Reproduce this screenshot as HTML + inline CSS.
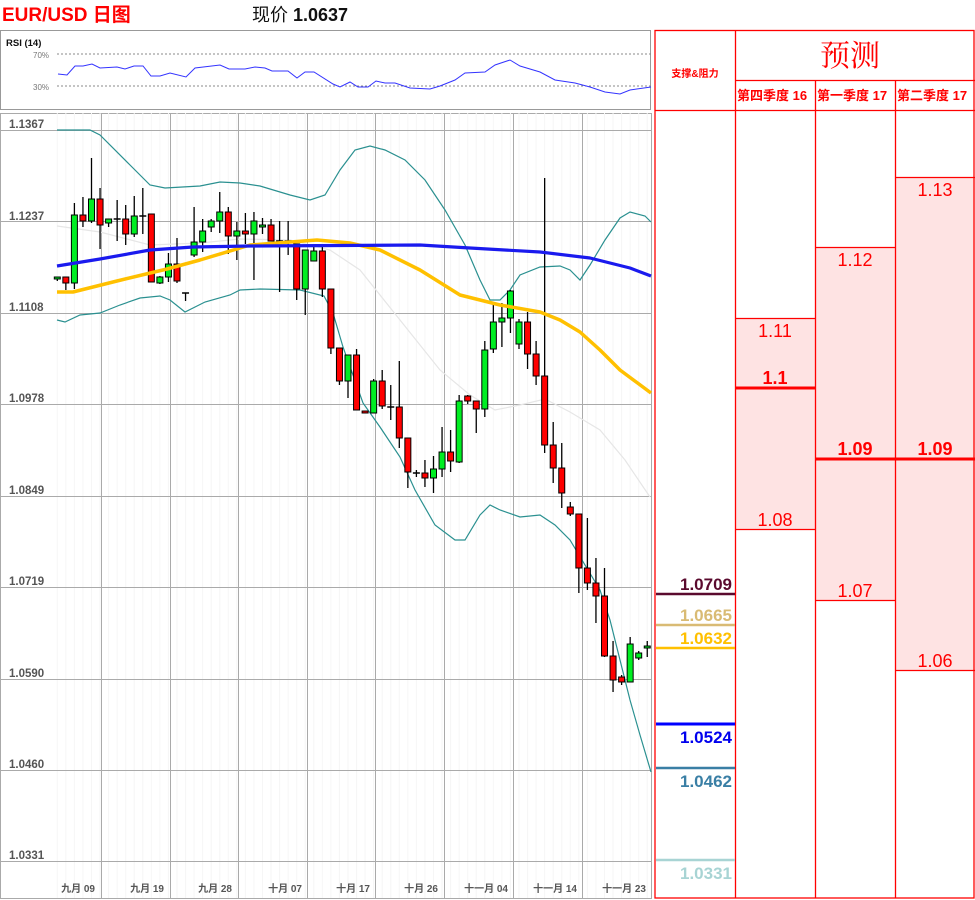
<!DOCTYPE html>
<html><head><meta charset="utf-8">
<style>
html,body{margin:0;padding:0;background:#fff;}
body{width:975px;height:900px;position:relative;overflow:hidden;font-family:"Liberation Sans","Noto Sans CJK SC",sans-serif;}
svg{position:absolute;left:0;top:0;}
</style></head>
<body>
<svg id="s" width="975" height="900" xmlns="http://www.w3.org/2000/svg" font-family="Liberation Sans, Noto Sans CJK SC, sans-serif">
<text x="2" y="21" font-size="19" font-weight="bold" fill="#f00">EUR/USD 日图</text>
<text x="252" y="21" font-size="18" fill="#111">现价 <tspan font-weight="bold">1.0637</tspan></text>
<!-- RSI panel -->
<rect x="0.5" y="30.5" width="650" height="79" fill="#fff" stroke="#999"/>
<text x="6" y="46" font-size="9.5" font-weight="bold" fill="#111">RSI (14)</text>
<text x="33" y="58" font-size="8" fill="#777">70%</text>
<text x="33" y="90" font-size="8" fill="#777">30%</text>
<line x1="57" y1="54" x2="651" y2="54" stroke="#888" stroke-dasharray="2,2"/>
<line x1="57" y1="86" x2="651" y2="86" stroke="#888" stroke-dasharray="2,2"/>
<polyline fill="none" stroke="#3333ff" stroke-width="1" points="58,74 67,75 75,66 83,66 92,64 100,68 117,67 125,69 134,66 143,66 151,76 160,76 170,73 186,77 195,68 220,65 229,69 245,69 255,67 265,68 272,71 288,71 297,78 305,72 314,72 333,84 340,87 350,82 358,87 368,87 376,81 385,83 395,83 410,88 430,89 440,86 455,80 465,73 485,72 495,65 510,60 520,66 540,72 555,80 575,83 590,87 605,92 620,94 630,90 651,87"/>
<!-- main chart -->
<rect x="0.5" y="113.5" width="651" height="785" fill="#fff" stroke="#aaa"/>
<g id="minor" stroke="#f6f6f6" stroke-width="1"></g>
<g stroke="#aaa" stroke-width="1">
<line x1="101.5" y1="113" x2="101.5" y2="898"/><line x1="170.5" y1="113" x2="170.5" y2="898"/>
<line x1="238.5" y1="113" x2="238.5" y2="898"/><line x1="307.5" y1="113" x2="307.5" y2="898"/>
<line x1="375.5" y1="113" x2="375.5" y2="898"/><line x1="444.5" y1="113" x2="444.5" y2="898"/>
<line x1="513.5" y1="113" x2="513.5" y2="898"/><line x1="582.5" y1="113" x2="582.5" y2="898"/>
<line x1="0" y1="130.5" x2="651" y2="130.5"/><line x1="0" y1="221.5" x2="651" y2="221.5"/>
<line x1="0" y1="313.5" x2="651" y2="313.5"/><line x1="0" y1="404.5" x2="651" y2="404.5"/>
<line x1="0" y1="496.5" x2="651" y2="496.5"/><line x1="0" y1="587.5" x2="651" y2="587.5"/>
<line x1="0" y1="679.5" x2="651" y2="679.5"/><line x1="0" y1="770.5" x2="651" y2="770.5"/>
<line x1="0" y1="861.5" x2="651" y2="861.5"/>
</g>
<g font-size="11.5" font-weight="bold" fill="#555">
<text x="9" y="128">1.1367</text><text x="9" y="220">1.1237</text><text x="9" y="311">1.1108</text>
<text x="9" y="402">1.0978</text><text x="9" y="494">1.0849</text><text x="9" y="585">1.0719</text>
<text x="9" y="677">1.0590</text><text x="9" y="768">1.0460</text><text x="9" y="859">1.0331</text>
</g>
<g font-size="10" font-weight="bold" fill="#555" text-anchor="end">
<text x="95" y="892">九月 09</text><text x="164" y="892">九月 19</text><text x="232" y="892">九月 28</text>
<text x="302" y="892">十月 07</text><text x="370" y="892">十月 17</text><text x="438" y="892">十月 26</text>
<text x="508" y="892">十一月 04</text><text x="577" y="892">十一月 14</text><text x="646" y="892">十一月 23</text>
</g>
<polyline fill="none" stroke="#e6e6e6" stroke-width="1.2" points="57,226 100,232 150,245 200,243 240,239 290,240 330,250 360,270 400,320 440,370 470,395 495,410 520,405 545,399 570,412 600,430 625,460 650,497"/>
<polyline fill="none" stroke="#2a9090" stroke-width="1.2" points="57,130 90,130 100,135 130,165 150,185 165,188 200,186 220,182 240,183 260,186 290,195 310,200 325,195 340,170 355,150 370,146 385,150 405,160 425,180 445,210 465,245 480,280 490,300 500,300 510,290 520,275 540,267 560,266 570,270 580,280 590,265 605,240 620,218 630,212 645,216 651,222"/>
<polyline fill="none" stroke="#2a9090" stroke-width="1.2" points="57,320 65,322 80,315 100,313 120,305 140,298 160,296 170,300 185,312 205,302 230,295 240,290 260,289 300,290 324,296 333,313 343,347 363,403 380,427 400,457 415,490 435,525 455,540 465,540 480,515 490,505 500,510 520,517 540,515 555,525 570,540 585,565 600,590 610,620 620,660 630,700 640,735 651,772"/>
<g id="candles"></g>
<polyline fill="none" stroke="#ffc000" stroke-width="3.5" stroke-linejoin="round" points="57,292 73,292 117,281 167,269 200,260 250,245 317,240 350,243 380,250 420,270 460,295 500,305 540,312 560,320 580,332 600,350 620,370 651,393"/>
<polyline fill="none" stroke="#1a1aee" stroke-width="3.2" stroke-linejoin="round" points="57,266 100,259 150,250 193,247 250,246 420,245 470,248 540,252 590,258 630,268 651,276"/>
<!-- right panel -->
<rect x="736" y="318" width="79" height="211" fill="#fee3e3"/>
<rect x="816" y="247" width="79" height="353" fill="#fee3e3"/>
<rect x="896" y="177" width="79" height="493" fill="#fee3e3"/>
<g stroke="#f00" stroke-width="1.3" fill="none">
<rect x="655" y="30.5" width="319" height="867.5"/>
<line x1="735.5" y1="30" x2="735.5" y2="898"/>
<line x1="815.5" y1="80" x2="815.5" y2="898"/>
<line x1="895.5" y1="80" x2="895.5" y2="898"/>
<line x1="735" y1="80.5" x2="975" y2="80.5"/>
<line x1="655" y1="110.5" x2="975" y2="110.5"/>
<line x1="735" y1="318.5" x2="815" y2="318.5"/>
<line x1="735" y1="529.5" x2="815" y2="529.5"/>
<line x1="815" y1="247.5" x2="895" y2="247.5"/>
<line x1="815" y1="600.5" x2="895" y2="600.5"/>
<line x1="895" y1="177.5" x2="975" y2="177.5"/>
<line x1="895" y1="670.5" x2="975" y2="670.5"/>
</g>
<line x1="735" y1="388" x2="815" y2="388" stroke="#f00" stroke-width="3"/>
<line x1="815" y1="459" x2="975" y2="459" stroke="#f00" stroke-width="3"/>
<text x="695" y="77" font-size="10" font-weight="bold" fill="#f00" text-anchor="middle">支撑&amp;阻力</text>
<text x="850" y="66" font-size="30" fill="#f00" text-anchor="middle" font-family="Noto Serif CJK SC, serif">预测</text>
<g font-size="13" font-weight="bold" fill="#f00">
<text x="737" y="100">第四季度 16</text><text x="817" y="100">第一季度 17</text><text x="897" y="100">第二季度 17</text>
</g>
<g font-size="18" fill="#f00" text-anchor="middle">
<text x="775" y="337">1.11</text><text x="775" y="526">1.08</text>
<text x="855" y="266">1.12</text><text x="855" y="597">1.07</text>
<text x="935" y="196">1.13</text><text x="935" y="667">1.06</text>
<g font-weight="bold"><text x="775" y="384">1.1</text><text x="855" y="455">1.09</text><text x="935" y="455">1.09</text></g>
</g>
<line x1="656" y1="594" x2="735" y2="594" stroke="#5a0a2e" stroke-width="2.5"/>
<line x1="656" y1="625" x2="735" y2="625" stroke="#d9bb74" stroke-width="2.5"/>
<line x1="656" y1="648" x2="735" y2="648" stroke="#ffc000" stroke-width="2.5"/>
<line x1="656" y1="724" x2="735" y2="724" stroke="#0000ff" stroke-width="3"/>
<line x1="656" y1="768" x2="735" y2="768" stroke="#3a7fa5" stroke-width="2.5"/>
<line x1="656" y1="860" x2="735" y2="860" stroke="#a8d4d4" stroke-width="2.5"/>
<g font-size="17" font-weight="bold" text-anchor="end">
<text x="732" y="590" fill="#5a0a2e">1.0709</text>
<text x="732" y="621" fill="#d9bb74">1.0665</text>
<text x="732" y="644" fill="#ffc000">1.0632</text>
<text x="732" y="743" fill="#0000ee">1.0524</text>
<text x="732" y="787" fill="#3a7fa5">1.0462</text>
<text x="732" y="879" fill="#a8d4d4">1.0331</text>
</g>
</svg>
<script>
var d=[
[277,279,277,281,'g'],[277,283,277,290,'r'],[215,283,203,289,'g'],[215,221,197,227,'r'],[199,221,158,223,'g'],
[199,225,188,249,'r'],[219,223,219,227,'g'],[219,219,200,241,'d'],[219,234,205,245,'r'],[216,234,196,237,'g'],
[216,216,188,234,'d'],[214,282,214,282,'r'],[277,283,276,284,'g'],[264,277,253,282,'g'],[264,281,238,283,'r'],
[293,293,293,301,'d'],[242,255,207,257,'g'],[231,242,219,252,'g'],[221,227,219,232,'g'],[212,221,192,233,'g'],
[212,236,207,254,'r'],[231,236,222,260,'g'],[231,234,213,244,'r'],[221,234,212,280,'g'],[225,227,218,234,'g'],
[225,241,219,241,'r'],[241,241,221,292,'d'],[241,241,221,255,'d'],[244,289,244,300,'r'],[250,289,250,315,'g'],
[251,261,247,261,'g'],[251,289,247,297,'r'],[289,348,289,354,'r'],[348,381,348,385,'r'],[355,381,355,398,'g'],
[355,410,349,410,'r'],[411,413,411,413,'r'],[381,413,379,413,'g'],[381,406,370,409,'r'],[407,407,385,420,'d'],
[407,438,361,448,'r'],[438,472,438,488,'r'],[473,473,470,477,'d'],[473,478,460,487,'r'],[469,478,456,493,'g'],
[452,469,427,477,'g'],[452,461,430,472,'r'],[401,462,395,463,'g'],[396,401,395,404,'r'],[401,409,401,433,'r'],
[350,409,341,417,'g'],[322,349,303,353,'g'],[318,322,303,347,'g'],[291,318,290,333,'g'],[322,344,319,349,'g'],
[322,354,312,369,'r'],[354,376,341,385,'r'],[376,445,178,453,'r'],[445,468,422,483,'r'],[468,493,443,508,'r'],
[507,514,502,516,'r'],[514,568,514,593,'r'],[568,583,518,590,'r'],[583,596,558,623,'r'],[596,656,568,657,'r'],
[656,680,641,692,'r'],[677,682,675,685,'r'],[644,682,637,682,'g'],[653,658,651,660,'g'],[646,647,641,657,'g']];
var ns='http://www.w3.org/2000/svg',g=document.getElementById('candles'),mg=document.getElementById('minor');
function el(n,a,p){var e=document.createElementNS(ns,n);for(var k in a)e.setAttribute(k,a[k]);p.appendChild(e);}
for(var i=0;i<70;i++){var x=57.3+8.55*i;el('line',{x1:x,y1:113,x2:x,y2:898},mg);}
d.forEach(function(c,i){var x=57.3+8.55*i;
el('line',{x1:x,y1:c[2],x2:x,y2:c[3],stroke:'#000','stroke-width':1.3},g);
if(c[4]=='d'){el('line',{x1:x-3.5,y1:c[0],x2:x+3.5,y2:c[0],stroke:'#000','stroke-width':1.5},g);}
else el('rect',{x:x-3,y:c[0],width:6,height:Math.max(c[1]-c[0],2),fill:c[4]=='g'?'#00ee22':'#ff0000',stroke:'#000','stroke-width':1},g);
});
</script>
</body></html>
